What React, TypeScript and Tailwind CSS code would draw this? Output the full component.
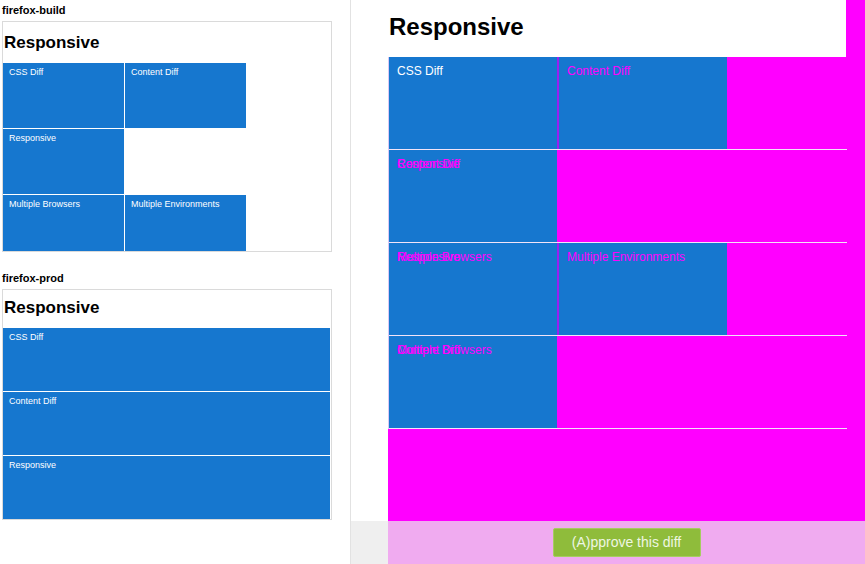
import React from 'react';

const BLUE = 'bg-[#1677cf]';

// small tile used in the two screenshots on the left
const Tile = ({ label, className = '' }: { label?: string; className?: string }) => (
    <div className={`${BLUE} pl-[6px] pt-[5px] text-[9px] leading-[9px] text-white ${className}`}>
        {label}
    </div>
);

const Shot = ({ name, children, frameClass }: any) => (
    <div>
        <div className="text-[11px] leading-[11px] font-bold text-black">{name}</div>
        <div className={`mt-[5px] w-[330px] border border-[#dadada] overflow-hidden ${frameClass}`}>
            {children}
        </div>
    </div>
);

// a cell of the diff overlay; texts stacked on top of each other
const DiffCell = ({ texts = [], white }: { texts?: string[]; white?: boolean }) => (
    <div className={`${BLUE} relative w-[168px] h-full`}>
        {texts.map((t, i) => (
            <span
                key={i}
                className={`absolute left-[8px] top-[8px] text-[12px] leading-[12px] whitespace-nowrap ${white ? 'text-white' : 'text-[#ff00ff]'}`}
            >
                {t}
            </span>
        ))}
    </div>
);

const Seam = () => <div className="w-[2px] h-full bg-[#9a1ff0]" />;

export default function App() {
    return (
        <div
            className="flex w-[865px] h-[564px] overflow-hidden bg-white"
            style={{ fontFamily: '"Liberation Sans", Arial, sans-serif' }}
        >
            {/* Left: both screenshots */}
            <div className="w-[351px] shrink-0 border-r border-[#e2e2e2] pl-[2px] pt-[5px]">
                <Shot name="firefox-build" frameClass="h-[231px]">
                    <div className="h-[41px] pt-[12px] pl-[1px] text-[17px] leading-[17px] font-bold text-black">
                        Responsive
                    </div>
                    <div className="grid grid-cols-[121px_121px] gap-px">
                        <Tile label="CSS Diff" className="h-[65px]" />
                        <Tile label="Content Diff" className="h-[65px]" />
                        <Tile label="Responsive" className="h-[65px]" />
                        <div />
                        <Tile label="Multiple Browsers" className="h-[65px]" />
                        <Tile label="Multiple Environments" className="h-[65px]" />
                    </div>
                </Shot>
                <div className="mt-[21px]">
                    <Shot name="firefox-prod" frameClass="h-[231px]">
                        <div className="h-[38px] pt-[9px] pl-[1px] text-[17px] leading-[17px] font-bold text-black">
                            Responsive
                        </div>
                        <div className="flex flex-col gap-px pr-px">
                            <Tile label="CSS Diff" className="h-[63px]" />
                            <Tile label="Content Diff" className="h-[63px]" />
                            <Tile label="Responsive" className="h-[63px]" />
                        </div>
                    </Shot>
                </div>
            </div>

            {/* Right: diff overlay + approve bar */}
            <div className="flex-1 flex flex-col">
                <div className="h-[521px] pl-[37px]">
                    <div className="w-[477px] h-full bg-[#ff00ff]">
                        <div className="h-[57px] flex">
                            <div className="w-[458px] bg-white pt-[15px] pl-[1px] text-[24px] leading-[24px] font-bold text-black">
                                Responsive
                            </div>
                        </div>
                        <div className="w-[459px] border-l border-[#d9c8f5]">
                            <div className="h-[93px] flex border-b border-[#f2e4f8]">
                                <DiffCell texts={['CSS Diff']} white />
                                <Seam />
                                <DiffCell texts={['Content Diff']} />
                            </div>
                            <div className="h-[93px] flex border-b border-[#f2e4f8]">
                                <DiffCell texts={['Responsive', 'Content Diff']} />
                            </div>
                            <div className="h-[93px] flex border-b border-[#f2e4f8]">
                                <DiffCell texts={['Multiple Browsers', 'Responsive']} />
                                <Seam />
                                <DiffCell texts={['Multiple Environments']} />
                            </div>
                            <div className="h-[93px] flex border-b border-[#f2e4f8]">
                                <DiffCell texts={['Multiple Browsers', 'Content Diff']} />
                            </div>
                        </div>
                    </div>
                </div>
                <div className="h-[43px] flex">
                    <div className="w-[37px] bg-[#efefef]" />
                    <div className="flex-1 bg-[#f0abf0] flex items-center justify-center">
                        <button className="w-[148px] h-[29px] bg-[#8fbc3b] border border-[#a6cc62] rounded-[2px] text-[14px] text-[#eef6e2]">
                            (A)pprove this diff
                        </button>
                    </div>
                </div>
            </div>
        </div>
    );
}
